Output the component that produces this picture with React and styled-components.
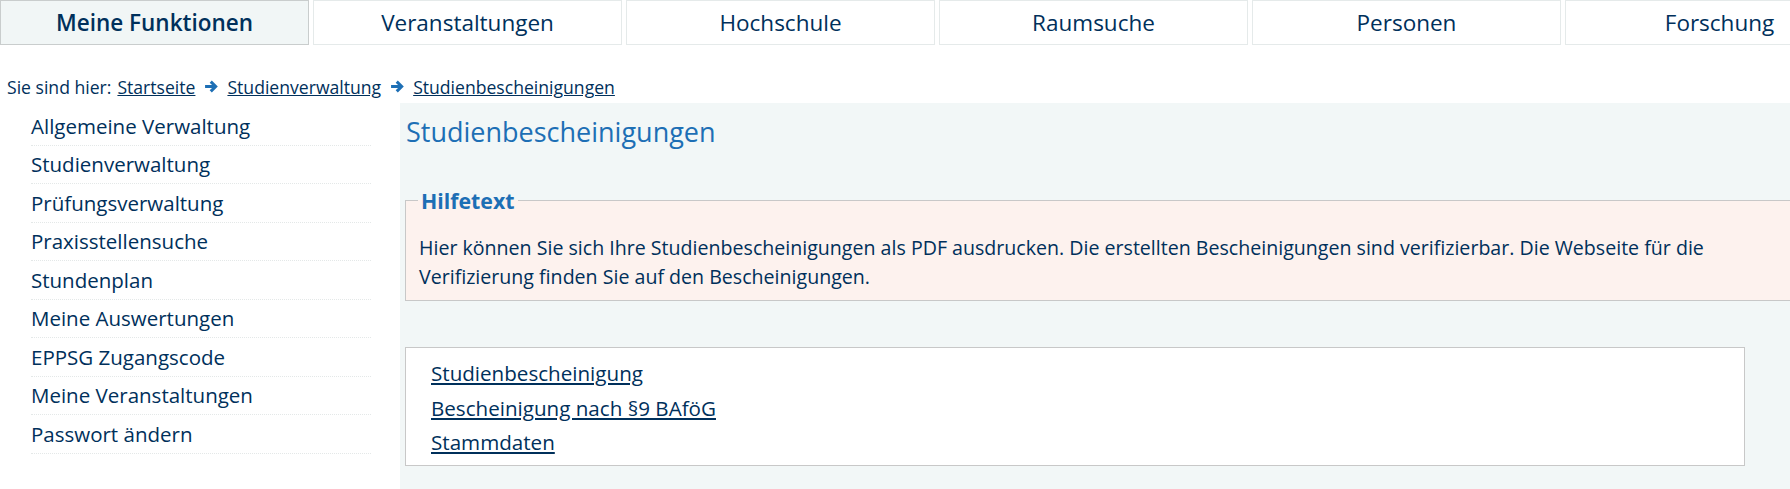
import styled, { createGlobalStyle } from "styled-components";

const GlobalStyle = createGlobalStyle`
  html, body {
    margin: 0;
    padding: 0;
    overflow: hidden;
    background: #fff;
  }
  body {
    font-family: "Open Sans", "Liberation Sans", sans-serif;
    color: #00305b;
  }
`;

const tabs = [
  "Meine Funktionen",
  "Veranstaltungen",
  "Hochschule",
  "Raumsuche",
  "Personen",
  "Forschung",
];

const menu = [
  "Allgemeine Verwaltung",
  "Studienverwaltung",
  "Prüfungsverwaltung",
  "Praxisstellensuche",
  "Stundenplan",
  "Meine Auswertungen",
  "EPPSG Zugangscode",
  "Meine Veranstaltungen",
  "Passwort ändern",
];

const links = [
  "Studienbescheinigung",
  "Bescheinigung nach §9 BAföG",
  "Stammdaten",
];

const Arrow = () => (
  <svg width="15" height="15" viewBox="0 0 14 14">
    <path
      d="M1 7h9M6.3 2.4L10.9 7l-4.6 4.6"
      fill="none"
      stroke="#1d6fb5"
      strokeWidth="2.8"
    />
  </svg>
);

export default function App() {
  return (
    <Page>
      <GlobalStyle />
      <TabBar>
        {tabs.map((t, i) => (
          <Tab key={t} active={i === 0}>
            {t}
          </Tab>
        ))}
      </TabBar>

      <Breadcrumb>
        <span>Sie sind hier:</span>
        <Crumb href="#">Startseite</Crumb>
        <Arrow />
        <Crumb href="#">Studienverwaltung</Crumb>
        <Arrow />
        <Crumb href="#">Studienbescheinigungen</Crumb>
      </Breadcrumb>

      <Body>
        <Sidebar>
          {menu.map((m) => (
            <MenuItem key={m}>
              <a href="#">{m}</a>
            </MenuItem>
          ))}
        </Sidebar>

        <Main>
          <Title>Studienbescheinigungen</Title>

          <HelpBox>
            <legend>Hilfetext</legend>
            <p>
              Hier können Sie sich Ihre Studienbescheinigungen als PDF
              ausdrucken. Die erstellten Bescheinigungen sind verifizierbar.
              Die Webseite für die
              <br />
              Verifizierung finden Sie auf den Bescheinigungen.
            </p>
          </HelpBox>

          <LinkBox>
            {links.map((l) => (
              <LinkItem key={l} href="#">
                {l}
              </LinkItem>
            ))}
          </LinkBox>
        </Main>
      </Body>
    </Page>
  );
}

const Page = styled.div`
  width: 1880px;
  height: 489px;
  display: flex;
  flex-direction: column;
`;

const TabBar = styled.nav`
  display: flex;
  gap: 4px;
  height: 45px;
`;

const Tab = styled.a`
  flex: 0 0 309px;
  box-sizing: border-box;
  display: flex;
  align-items: center;
  justify-content: center;
  font-size: 22.5px;
  font-weight: ${(p) => (p.active ? 600 : 400)};
  color: #00305b;
  background: ${(p) => (p.active ? "#f1f6f6" : "#fff")};
  border: 1px solid ${(p) => (p.active ? "#c9cdcd" : "#e5eaea")};
  cursor: pointer;
`;

const Breadcrumb = styled.div`
  display: flex;
  align-items: center;
  gap: 6px;
  padding: 25px 0 0 7px;
  height: 33px;
  font-size: 17.6px;
  color: #00305b;
  svg {
    margin: 0 2px 0 3px;
  }
`;

const Crumb = styled.a`
  color: #00305b;
  text-decoration: underline;
`;

const Body = styled.div`
  flex: 1;
  display: flex;
`;

const Sidebar = styled.ul`
  list-style: none;
  margin: 0;
  padding: 4px 29px 0 31px;
  width: 340px;
  flex-shrink: 0;
`;

const MenuItem = styled.li`
  height: 37.5px;
  display: flex;
  align-items: center;
  border-bottom: 1px dotted #e4e8e8;
  a {
    color: #00305b;
    text-decoration: none;
    font-size: 20.5px;
  }
`;

const Main = styled.main`
  flex: 1;
  background: #f2f7f7;
  padding: 6px 0 0 5px;
`;

const Title = styled.h1`
  margin: 0 0 0 1px;
  font-size: 27px;
  font-weight: 400;
  color: #1d6fb5;
  line-height: 46px;
`;

const HelpBox = styled.fieldset`
  margin: 31px 0 0 0;
  padding: 19px 13px 9px 13px;
  background: #fdf2ee;
  border: 1px solid #c8c8c8;
  legend {
    font-size: 21.3px;
    font-weight: 700;
    color: #1d6fb5;
    padding: 0 3px;
    margin-left: -1px;
  }
  p {
    margin: 0;
    font-size: 19.6px;
    line-height: 28.5px;
  }
`;

const LinkBox = styled.div`
  margin-top: 46px;
  width: 1340px;
  box-sizing: border-box;
  background: #fff;
  border: 1px solid #c8c8c8;
  padding: 8px 25px 5px;
  display: flex;
  flex-direction: column;
`;

const LinkItem = styled.a`
  font-size: 20.6px;
  line-height: 34.5px;
  color: #00305b;
  text-decoration: underline;
  align-self: flex-start;
`;
